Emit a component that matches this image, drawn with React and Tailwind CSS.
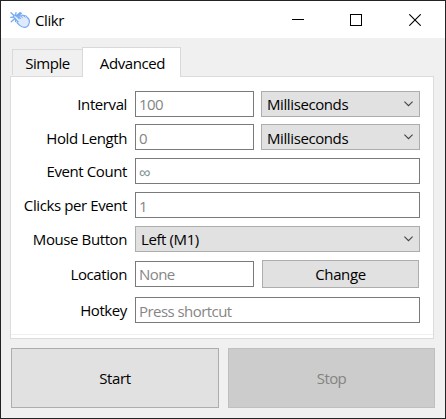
import React from "react";

function Field({ text, className = "w-[285px]", textClass = "" }) {
  return (
    <div className={`flex h-[26px] items-center border border-[#7a7a7a] bg-white pl-[3px] text-[#868686] tracking-[-0.55px] ${className}`}>
      <span className={textClass}>{text}</span>
    </div>
  );
}

function Select({ text, className = "w-[159px]", textClass = "" }) {
  return (
    <div className={`flex h-[26px] items-center justify-between border border-[#adadad] bg-[#e1e1e1] pl-[5px] pr-[6px] ${className}`}>
      <span className={textClass}>{text}</span>
      <svg width="9" height="6" viewBox="0 0 9 6" fill="none" stroke="#444" strokeWidth="1.1">
        <path d="M0.4 0.6 L4.5 4.7 L8.6 0.6" />
      </svg>
    </div>
  );
}

function Row({ label, labelClass = "", className = "", children }) {
  return (
    <div className={`flex h-[26px] items-center ${className}`}>
      <div className="mr-[8px] flex w-[116px] justify-end">
        <span className={labelClass}>{label}</span>
      </div>
      {children}
    </div>
  );
}

function AppIcon() {
  return (
    <svg width="21" height="18" viewBox="0 0 21 18" fill="none" stroke="#75a9f3" strokeLinecap="round" strokeLinejoin="round">
      <path
        d="M4.2 4.2 C5 3.6 5.7 4.1 6.4 4.8 L9.2 7.6 L8.8 5.6 C9 4.4 10.2 4.4 11 5.2 C11.6 4 12.8 3.8 13.8 4.8 C15 4.2 16.2 4.8 17 6.2 C18.8 7.4 19.6 9 19.4 11.2 C18.8 14.4 16.9 16.6 14.4 16.4 C12.3 16.4 11 15.6 9.7 14.4 L7.2 12 C6.6 11.2 7.2 10.4 8.2 10.8 L4.3 7 C3.4 6 3.5 4.8 4.2 4.2 Z"
        fill="#dfeafc"
        strokeWidth="1.1"
      />
      <path d="M8.8 5.6 L10.6 7.6 M11 5.2 L12.4 6.8 M13.8 4.8 L15 6.2" strokeWidth="1" />
      <path d="M1 1.8 L3.6 4.2 M6.2 5 L10.2 1.4 M7.6 5 L11.4 2.4 M0.8 6.4 L3.6 6 M1.2 10.8 L4.8 7.6 M6 1.6 L5.6 4.2 M5.6 10.6 L5.4 8" strokeWidth="1.3" />
    </svg>
  );
}

export default function App() {
  return (
    <div className="flex h-[419px] w-[446px] flex-col overflow-hidden whitespace-nowrap border border-[#232323] bg-[#f0f0f0] font-['Open_Sans',sans-serif] text-[15px] leading-[20px] tracking-[-0.4px] text-black">
      <header className="flex h-[37px] shrink-0 items-center bg-white pl-[9px]">
        <AppIcon />
        <span className="ml-[4px]">Clikr</span>
        <div className="ml-auto flex items-center pr-[24px]">
          <div className="h-px w-[12px] bg-black" />
          <div className="ml-[46px] mr-[47px] h-[12px] w-[12px] border border-black" />
          <svg width="12" height="12" viewBox="0 0 12 12" stroke="black" strokeWidth="1.1">
            <path d="M0.3 0.3 L11.7 11.7 M11.7 0.3 L0.3 11.7" />
          </svg>
        </div>
      </header>

      <nav className="relative z-10 mt-[9px] flex h-[30px] shrink-0 items-start pl-[11px]">
        <div className="mt-[2px] flex h-[26px] w-[70px] items-center justify-center border-l border-t border-[#d9d9d9] pt-px">
          <span className="tracking-[-0.5px]">Simple</span>
        </div>
        <div className="flex h-[30px] w-[99px] items-center justify-center border-x border-t border-[#d9d9d9] bg-white pl-[2px]">
          <span>Advanced</span>
        </div>
      </nav>

      <main className="-mt-px ml-[9px] flex h-[263px] w-[424px] shrink-0 flex-col border border-[#dcdcdc] bg-white pt-[14px]">
        <Row label="Interval">
          <Field text="100" className="mr-[7px] w-[119px]" />
          <Select text="Milliseconds" />
        </Row>
        <Row label="Hold Length" labelClass="pt-[2px]" className="mt-[7px]">
          <Field text="0" textClass="pt-[2px]" className="mr-[7px] w-[119px]" />
          <Select text="Milliseconds" textClass="pt-[2px]" />
        </Row>
        <Row label="Event Count" className="mt-[8px]">
          <Field text="∞" textClass="pt-[3px] font-['Liberation_Sans',sans-serif] text-[16px] text-[#7f9292]" />
        </Row>
        <Row label="Clicks per Event" className="mt-[8px]">
          <Field text="1" textClass="pt-[2px]" />
        </Row>
        <Row label="Mouse Button" className="mt-[8px]">
          <Select text="Left (M1)" className="w-[285px]" />
        </Row>
        <Row label="Location" className="mt-[9px]">
          <Field text="None" className="mr-[8px] w-[119px]" />
          <button className="flex h-[28px] w-[157px] items-center justify-center border border-[#adadad] bg-[#e1e1e1]">
            Change
          </button>
        </Row>
        <Row label="Hotkey" className="mt-[10px]">
          <Field text="Press shortcut" textClass="pt-[2px]" />
        </Row>
        <div className="mt-[11px] h-px bg-[#f0f0f0]" />
      </main>

      <footer className="mt-[9px] flex gap-[9px] pl-[10px]">
        <button className="h-[60px] w-[208px] border border-[#adadad] bg-[#e1e1e1] tracking-[-0.4px]">Start</button>
        <button className="h-[60px] w-[207px] border border-[#bfbfbf] bg-[#cccccc] tracking-[-0.6px] text-[#838383]">Stop</button>
      </footer>
    </div>
  );
}
